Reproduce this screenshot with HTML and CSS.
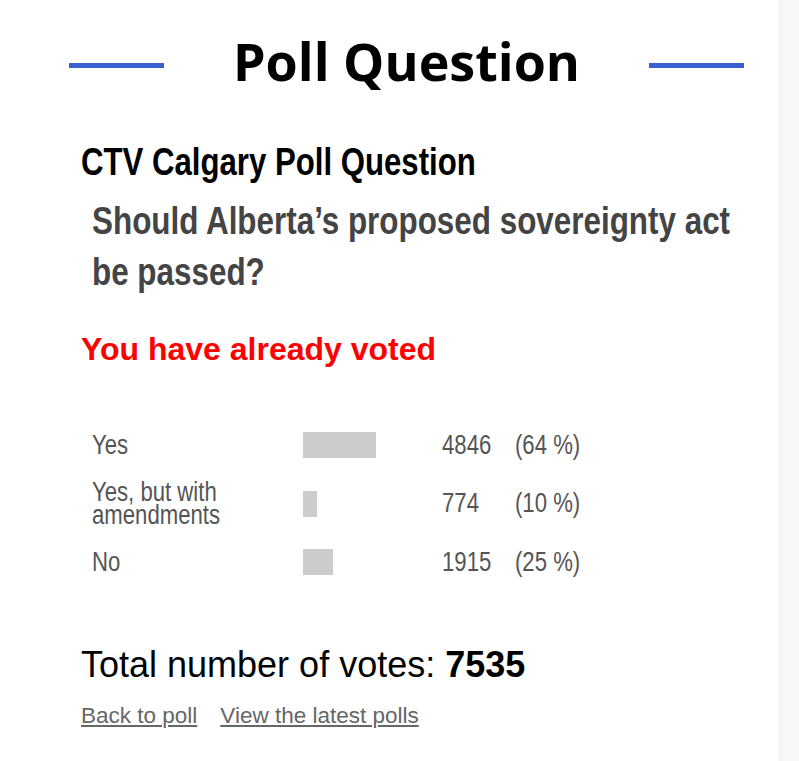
FILE: index.html
```html
<!DOCTYPE html>
<html lang="en">
<head>
<meta charset="utf-8">
<title>Poll Question</title>
<link rel="stylesheet" href="styles.css">
</head>
<body>
<main class="page">
  <header class="banner">
    <span class="rule"></span>
    <h1 class="banner-title">Poll Question</h1>
    <span class="rule"></span>
  </header>
  <section class="poll">
    <h2 class="poll-source">CTV Calgary Poll Question</h2>
    <p class="poll-question">Should Alberta’s proposed sovereignty act be passed?</p>
    <p class="voted">You have already voted</p>
    <div class="results">
      <div class="label">Yes</div>
      <div class="bar-cell"><span class="bar" style="width:73px"></span></div>
      <div class="count">4846</div>
      <div class="pct">(64 %)</div>

      <div class="label">Yes, but with amendments</div>
      <div class="bar-cell"><span class="bar" style="width:14px"></span></div>
      <div class="count">774</div>
      <div class="pct">(10 %)</div>

      <div class="label">No</div>
      <div class="bar-cell"><span class="bar" style="width:30px"></span></div>
      <div class="count">1915</div>
      <div class="pct">(25 %)</div>
    </div>
    <p class="total">Total number of votes: <strong>7535</strong></p>
    <nav class="links">
      <a href="#">Back to poll</a>
      <a href="#">View the latest polls</a>
    </nav>
  </section>
</main>
<aside class="gutter"></aside>
</body>
</html>
```

FILE: styles.css
```css
html, body {
  margin: 0;
  padding: 0;
}
body {
  display: flex;
  min-height: 761px;
  background: #ffffff;
  font-family: "Liberation Sans", Arial, sans-serif;
}
.page {
  width: 778px;
  flex: none;
  background: #ffffff;
  overflow: hidden;
}
.gutter {
  flex: 1;
  background: #f7f7f7;
}

.banner {
  display: flex;
  align-items: flex-start;
  justify-content: space-between;
  width: 675px;
  padding: 35px 0 0 69px;
}
.rule {
  width: 95px;
  height: 5px;
  margin-top: 28px;
  background: #3a5fd0;
}
.banner-title {
  margin: 0;
  font-family: "Open Sans", "Liberation Sans", sans-serif;
  font-weight: 700;
  font-size: 52px;
  line-height: 52px;
  color: #000;
}

.poll {
  padding-left: 81px;
}

/* narrow (Arial Narrow–like) type used by the poll widget */
.narrow {
  transform-origin: left center;
}
.poll-source {
  margin: 56px 0 0;
  font-weight: 700;
  font-size: 38px;
  line-height: 38px;
  color: #000;
  transform: scaleX(0.82);
  transform-origin: left center;
}
.poll-question {
  margin: 14px 0 0 11px;
  width: 790px;
  font-weight: 700;
  font-size: 38.3px;
  line-height: 51px;
  color: #444;
  transform: scaleX(0.82);
  transform-origin: left center;
}
.voted {
  margin: 36px 0 0;
  font-weight: 700;
  font-size: 32px;
  line-height: 32px;
  color: #f00;
}

.results {
  display: grid;
  grid-template-columns: 211px 139px 73px auto;
  grid-auto-rows: 58.5px;
  align-items: center;
  margin: 51px 0 0 11px;
  font-size: 27px;
  line-height: 23px;
  color: #555;
}
.label,
.count,
.pct {
  transform: scaleX(0.82);
  transform-origin: left center;
}
.label {
  width: 162px;
}
.bar-cell {
  display: flex;
  align-items: center;
}
.bar {
  display: block;
  height: 26px;
  background: #cccccc;
}

.total {
  margin: 55px 0 0;
  font-size: 36px;
  line-height: 36px;
  color: #000;
}
.total strong {
  font-weight: 700;
}
.links {
  display: flex;
  gap: 23px;
  margin-top: 22px;
  font-size: 22.5px;
  line-height: 22px;
}
.links a {
  color: #666;
  text-decoration: underline;
}
```
